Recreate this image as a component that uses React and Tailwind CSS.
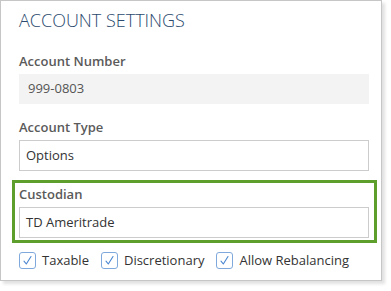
import React from "react"

const font = { fontFamily: '"Open Sans", "Noto Sans", sans-serif' }

function Check({ label }) {
  return (
    <label className="flex items-center gap-[6px] whitespace-nowrap">
      <span className="flex h-[17px] w-[17px] items-center justify-center rounded-[3px] border border-[#7fa9dc] bg-white">
        <svg width="11" height="11" viewBox="0 0 11 11" fill="none">
          <path d="M2 6.2 L4.3 9 L9 1.5" stroke="#4a86d0" strokeWidth="1.1" strokeLinecap="round" strokeLinejoin="round" />
        </svg>
      </span>
      <span className="text-[13px] leading-[19px] text-[#333]">{label}</span>
    </label>
  )
}

function Field({ label, value, disabled }) {
  return (
    <div>
      <div className="text-[13px] font-semibold leading-[18px] text-[#5a5a5a]">{label}</div>
      <div
        className={
          disabled
            ? "mt-[4px] flex h-[30px] w-[350px] items-center bg-[#f3f3f3] px-[9px] text-[13px] text-[#555]"
            : "mt-[4px] flex h-[31px] w-[350px] items-center border border-[#cccccc] bg-white px-[6px] text-[13px] text-[#333]"
        }
      >
        {value}
      </div>
    </div>
  )
}

export default function App() {
  return (
    <div className="h-[291px] w-[391px] bg-white" style={font}>
      <div className="h-[281px] w-[382px] border border-[#c6c6c6] bg-white pl-[18px] pr-[12px] pt-[6px] shadow-[3px_3px_3px_rgba(0,0,0,0.12)]">
        <h1 className="text-[18px] font-light leading-[26px] text-[#2b4a6e]">ACCOUNT SETTINGS</h1>
        <div className="mt-[19px]">
          <Field label="Account Number" value="999-0803" disabled />
        </div>
        <div className="mt-[14px]">
          <Field label="Account Type" value="Options" />
        </div>
        <div className="-ml-[7px] mt-[9px] w-[365px] border-[3px] border-[#5e9e2c] pb-[2px] pl-[4px] pr-[5px] pt-[2px]">
          <Field label="Custodian" value="TD Ameritrade" />
        </div>
        <div className="mt-[8px] flex items-center gap-[12px]">
          <Check label="Taxable" />
          <Check label="Discretionary" />
          <Check label="Allow Rebalancing" />
        </div>
      </div>
    </div>
  )
}
